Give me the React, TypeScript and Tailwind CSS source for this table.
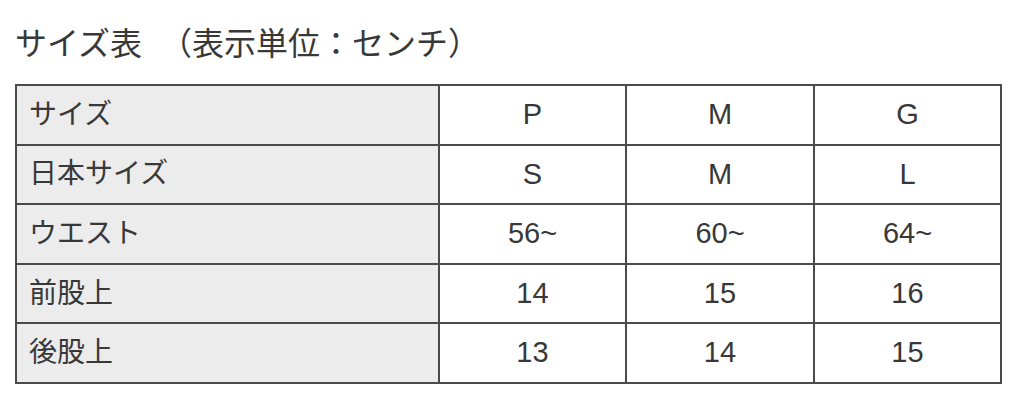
const rows: [string, string, string, string][] = [
  ["サイズ", "P", "M", "G"],
  ["日本サイズ", "S", "M", "L"],
  ["ウエスト", "56~", "60~", "64~"],
  ["前股上", "14", "15", "16"],
  ["後股上", "13", "14", "15"],
];

export default function App() {
  return (
    <div
      className="w-[1024px] h-[403px] bg-white text-[#383838] pl-[15px] pt-[23px]"
      style={{ fontFamily: '"Liberation Sans", "Noto Sans CJK JP", sans-serif' }}
    >
      <h2 className="text-[32px] leading-[42px] h-[61px] font-normal">
        サイズ表 <span className="ml-[9px]">（表示単位：センチ）</span>
      </h2>
      <table className="w-[985px] border-collapse table-fixed">
        <colgroup>
          <col className="w-[423px]" />
          <col className="w-[187px]" />
          <col className="w-[188px]" />
          <col className="w-[187px]" />
        </colgroup>
        <tbody>
          {rows.map((r) => (
            <tr key={r[0]} className="h-[59.6px]">
              <td className="border-2 border-[#4a4a4a] bg-[#ececec] pl-[12px] text-[28px] p-0">{r[0]}</td>
              {r.slice(1).map((v, i) => (
                <td key={i} className="border-2 border-[#4a4a4a] text-center text-[29px] p-0">
                  {v}
                </td>
              ))}
            </tr>
          ))}
        </tbody>
      </table>
    </div>
  );
}
